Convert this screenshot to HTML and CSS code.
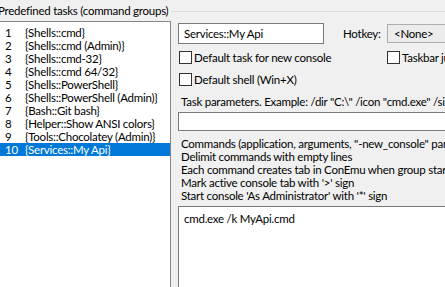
FILE: index.html
```html
<!DOCTYPE html>
<html lang="en">
<head>
    <meta charset="UTF-8">
    <meta name="viewport" content="width=device-width, initial-scale=1.0">
    <title>Predefined tasks</title>
    <link rel="stylesheet" href="styles.css">
</head>
<body>

    <div class="group-head">
        <span class="group-title">Predefined tasks (command groups)</span>
        <span class="group-line"></span>
    </div>

    <div class="main">
        <ul class="task-list">
            <li><span class="num">1</span>{Shells::cmd}</li>
            <li><span class="num">2</span>{Shells::cmd (Admin)}</li>
            <li><span class="num">3</span>{Shells::cmd-32}</li>
            <li><span class="num">4</span>{Shells::cmd 64/32}</li>
            <li><span class="num">5</span>{Shells::PowerShell}</li>
            <li><span class="num">6</span>{Shells::PowerShell (Admin)}</li>
            <li><span class="num">7</span>{Bash::Git bash}</li>
            <li><span class="num">8</span>{Helper::Show ANSI colors}</li>
            <li><span class="num">9</span>{Tools::Chocolatey (Admin)}</li>
            <li class="selected"><span class="num">10</span>{Services::My Api}</li>
        </ul>

        <div class="editor">
            <div class="name-row">
                <div class="edit name">Services::My Api</div>
                <span class="hotkey-label">Hotkey:</span>
                <div class="combo">&lt;None&gt;</div>
            </div>

            <div class="check-row">
                <label class="check"><span class="box"></span>Default task for new console</label>
                <label class="check"><span class="box"></span>Taskbar jump lists</label>
            </div>
            <label class="check shell"><span class="box"></span>Default shell (Win+X)</label>

            <div class="hint">Task parameters. Example: /dir "C:\" /icon "cmd.exe" /single</div>
            <div class="edit params"></div>

            <div class="notes">
                <div>Commands (application, arguments, "-new_console" params)</div>
                <div>Delimit commands with empty lines</div>
                <div>Each command creates tab in ConEmu when group started</div>
                <div>Mark active console tab with '&gt;' sign</div>
                <div>Start console 'As Administrator' with '*' sign</div>
            </div>

            <div class="edit commands">cmd.exe /k MyApi.cmd</div>
        </div>
    </div>

</body>
</html>
```

FILE: styles.css
```css
body {
    margin: 0;
    background: #f0f0f0;
    font-family: Lato, "Noto Sans", sans-serif;
    font-size: 11.5px;
    letter-spacing: -0.25px;
    line-height: 13px;
    color: #000;
    white-space: nowrap;
    overflow: hidden;
    height: 287px;
}

.group-head {
    display: flex;
    align-items: center;
    height: 21px;
    margin-left: -2px;
}

.group-title {
    padding-right: 3px;
}

.group-line {
    flex: 1;
    border-top: 1px solid #dcdcdc;
    margin-top: 1px;
}

.main {
    display: flex;
    gap: 7px;
    margin-left: -1px;
}

.task-list {
    list-style: none;
    margin: 0;
    padding: 4px 0 0;
    width: 172px;
    height: 280px;
    flex-shrink: 0;
    background: #fff;
    border: 1px solid #828790;
    box-sizing: border-box;
}

.task-list li {
    height: 13px;
    padding-left: 1px;
}

.task-list .num {
    display: inline-block;
    width: 24px;
    padding-left: 4px;
    box-sizing: border-box;
}

.task-list .selected {
    background: #0078d7;
    color: #fff;
}

.editor {
    display: flex;
    flex-direction: column;
    width: 320px;
    flex-shrink: 0;
    padding-top: 2px;
}

.edit {
    background: #fff;
    border: 1px solid #7a7a7a;
    box-sizing: border-box;
    padding-left: 5px;
}

.name-row {
    display: flex;
    align-items: center;
    height: 21px;
}

.name {
    width: 146px;
    height: 21px;
    line-height: 19px;
}

.hotkey-label {
    margin-left: 19px;
    width: 44px;
    flex-shrink: 0;
}

.combo {
    width: 100px;
    flex-shrink: 0;
    height: 19px;
    line-height: 17px;
    padding-left: 6px;
    background: #ececec;
    border: 1px solid #adadad;
    box-sizing: border-box;
}

.check-row {
    display: grid;
    grid-template-columns: 208px auto;
    margin-top: 7px;
}

.check {
    display: flex;
    align-items: center;
    gap: 2px;
    height: 13px;
    margin-left: 1px;
}

.check .box {
    width: 13px;
    height: 13px;
    box-sizing: border-box;
    border: 1px solid #333;
    background: #fff;
    flex-shrink: 0;
}

.shell {
    margin-top: 9px;
}

.hint {
    margin-top: 9px;
    padding-left: 3px;
}

.params {
    height: 19px;
    margin-top: 4px;
}

.notes {
    margin-top: 6px;
    padding-left: 3px;
}

.commands {
    margin-top: 4px;
    height: 90px;
    padding-top: 5px;
}
```
